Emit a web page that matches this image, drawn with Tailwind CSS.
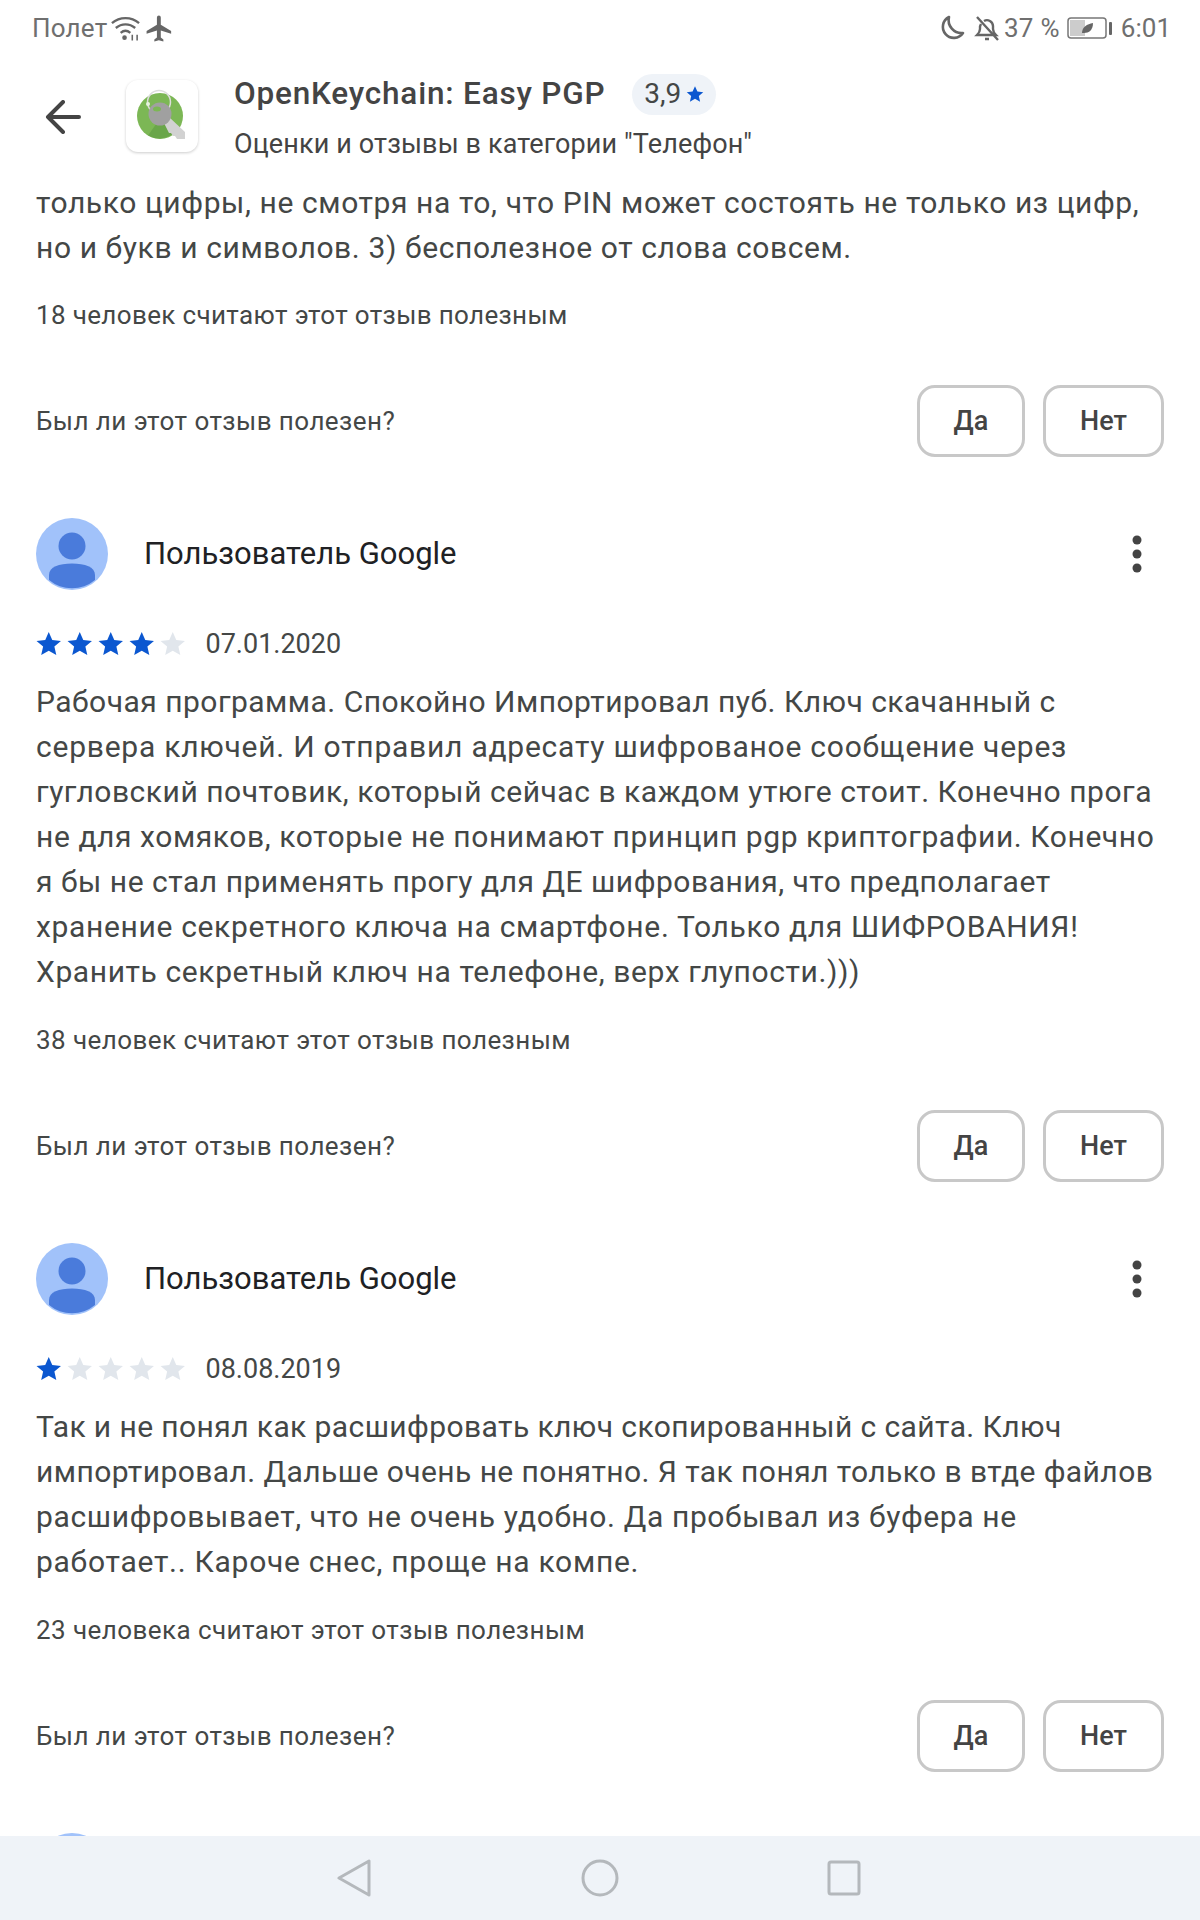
<!DOCTYPE html>
<html lang="ru"><head><meta charset="utf-8">
<script src="https://cdn.jsdelivr.net/npm/@tailwindcss/browser@4"></script>
</head>
<body class="bg-white">
<div class="w-[1200px] h-[1920px] flex flex-col overflow-hidden font-['Roboto',sans-serif] text-[#444746] bg-white">
  <div class="h-[56px] shrink-0 flex items-center justify-between pl-[32px] pr-[29px] text-[26px] text-[#6f6f6f]">
    <div class="flex items-center">
      <span class="tracking-[0.2px]">Полет</span>
      <svg class="ml-[3px]" width="31" height="28" viewBox="0 0 32 28" fill="none" stroke="#666" stroke-width="2.4"><path d="M2 9c8-7 20-7 28 0M6 14c6-5 14-5 20 0M11 19c3-2.5 7-2.5 10 0"/><circle cx="15" cy="24" r="2.4" fill="#666" stroke="none"/><path d="M23 21v6M28 21v6" stroke-width="1.6"/></svg>
      <svg class="ml-[3px]" width="31" height="31" viewBox="0 0 24 24" fill="#666"><path d="M21 16v-2l-8-5V3.500a1.500 1.500 0 0 0-3 0V9l-8 5v2l8-2.500V19l-2 1.500V22l3.500-1 3.500 1v-1.500L13 19v-5.500z"/></svg>
    </div>
    <div class="flex items-center">
      <svg width="28" height="28" viewBox="0 0 28 28" fill="none" stroke="#666" stroke-width="2.600"><path d="M11 3a11 11 0 1 0 14 16 A13 13 0 0 1 11 3z" stroke-linejoin="round"/></svg>
      <svg class="ml-[8px]" width="26" height="28" viewBox="0 0 26 28" fill="none" stroke="#666" stroke-width="2.400"><path d="M6 21h16c-2-2-3-3-3-6v-3a6 6 0 0 0-9-5M7 10c-.5 1-1 2-1 3v2c0 3-1 4-3 6h3M11 25h4M3 3l21 23"/></svg>
      <span class="ml-[4px] tracking-[0.3px]">37 %</span>
      <svg class="ml-[7px]" width="46" height="24" viewBox="0 0 46 24" fill="none"><rect x="1" y="2" width="38" height="20" rx="3" stroke="#777" stroke-width="1.500"/><rect x="3" y="4" width="15" height="16" fill="#ccc"/><path d="M15 17c0-6 5-9 11-10 0 7-4 10-9 10z" fill="#666"/><rect x="42" y="6" width="3" height="13" rx="1" fill="#666"/></svg>
      <span class="ml-[8px]">6:01</span>
    </div>
  </div>

  <div class="h-[124px] shrink-0 flex items-start pl-[45px] pt-[24px]">
    <svg class="mt-[20px]" width="36" height="34" viewBox="0 0 36 34" fill="none" stroke="#444" stroke-width="4" stroke-linecap="round" stroke-linejoin="round"><path d="M34 17H3M18 2 3 17l15 15"/></svg>
    <div class="ml-[45px] w-[72px] h-[72px] rounded-[12px] bg-white shadow-[0_1px_3px_rgba(0,0,0,0.2)] flex items-center justify-center">
      <svg width="56" height="56" viewBox="0 0 56 56"><circle cx="26" cy="28" r="23" fill="#7cb755"/><path d="M14 47.500l12-17 21 14-9 2a23 23 0 0 1-24 1z" fill="#5f9b42" opacity=".6"/><circle cx="25" cy="14" r="11.500" fill="none" stroke="#ddd" stroke-width="1.500"/><circle cx="14" cy="16" r="2" fill="#e8f2e0"/><path d="M30 35l5-6 16 15v7h-8l-2-3-2 0-2-3-2 0z" fill="#d2d2d2"/><circle cx="26" cy="26" r="11.500" fill="#a0a0a0"/><ellipse cx="23" cy="21" rx="4" ry="2.500" fill="#7cb755"/></svg>
    </div>
    <div class="ml-[36px]">
      <div class="flex items-center h-[40px] -mt-[6px]">
        <span class="text-[31.500px] font-medium text-[#444] tracking-[0.8px]">OpenKeychain: Easy PGP</span>
        <span class="ml-[27px] h-[41px] w-[84px] rounded-full bg-[#eff3f8] flex items-center justify-center gap-[5px] text-[28px]">3,9
          <svg width="18" height="18" viewBox="0 0 24 24" fill="#0b57d0"><path d="M12 1.500l3.200 7.200 7.800.8-5.900 5.200 1.700 7.700L12 18.400l-6.800 4 1.700-7.700L1 9.500l7.800-.8z"/></svg>
        </span>
      </div>
      <div class="text-[27px] leading-[40px] mt-[10px] text-[#444] tracking-[0.13px]">Оценки и отзывы в категории "Телефон"</div>
    </div>
  </div>

  <div class="flex-1 min-h-0 overflow-hidden pl-[36px] pr-[36px]">
    <div class="text-[30px] leading-[45px] whitespace-nowrap tracking-[0.6px]">
      <div>только цифры, не смотря на то, что PIN может состоять не только из цифр,</div>
      <div>но и букв и символов. 3) бесполезное от слова совсем.</div>
    </div>
    <div class="text-[26px] leading-[34px] mt-[28px] tracking-[0.35px]">18 человек считают этот отзыв полезным</div>
    <div class="flex items-center justify-between mt-[53px] h-[72px]">
      <span class="text-[26px] tracking-[0.45px]">Был ли этот отзыв полезен?</span>
      <div class="flex gap-[18px]">
        <div class="w-[108px] h-[72px] rounded-[18px] border-[3px] border-[#c8c8c8] flex items-center justify-center text-[27px] font-medium text-[#444]">Да</div>
        <div class="w-[121px] h-[72px] rounded-[18px] border-[3px] border-[#c8c8c8] flex items-center justify-center text-[27px] font-medium text-[#444]">Нет</div>
      </div>
    </div>

    <div class="mt-[61px] flex items-center h-[72px]">
      <svg width="72" height="72" viewBox="0 0 72 72"><circle cx="36" cy="36" r="36" fill="#a1c2fa"/><circle cx="36" cy="28" r="13.500" fill="#4a7bdb"/><path d="M13 62v-5c0-8 10-11.500 23-11.500S59 49 59 57v5a36 36 0 0 1-46 0z" fill="#4a7bdb"/></svg>
      <span class="ml-[36px] text-[31px] text-[#202124]">Пользователь Google</span>
      <svg class="ml-auto mr-[22px]" width="10" height="38" viewBox="0 0 10 38" fill="#444"><circle cx="5" cy="5" r="4.500"/><circle cx="5" cy="19" r="4.500"/><circle cx="5" cy="33" r="4.500"/></svg>
    </div>
    <div class="flex items-center h-[36px] mt-[36px]">
      <div class="flex gap-[5.500px]">
        <svg width="25.500" height="25.500" viewBox="0 0 24 24" fill="#0b57d0"><path d="M12 1l3.300 7.500 8.200.8-6.200 5.400 1.800 8L12 18.600l-7.100 4.100 1.800-8L.5 9.300l8.200-.8z"/></svg>
        <svg width="25.500" height="25.500" viewBox="0 0 24 24" fill="#0b57d0"><path d="M12 1l3.300 7.500 8.200.8-6.200 5.400 1.800 8L12 18.600l-7.100 4.100 1.800-8L.5 9.300l8.200-.8z"/></svg>
        <svg width="25.500" height="25.500" viewBox="0 0 24 24" fill="#0b57d0"><path d="M12 1l3.300 7.500 8.200.8-6.200 5.400 1.800 8L12 18.600l-7.100 4.100 1.800-8L.5 9.300l8.200-.8z"/></svg>
        <svg width="25.500" height="25.500" viewBox="0 0 24 24" fill="#0b57d0"><path d="M12 1l3.300 7.500 8.200.8-6.200 5.400 1.800 8L12 18.600l-7.100 4.100 1.800-8L.5 9.300l8.200-.8z"/></svg>
        <svg width="25.500" height="25.500" viewBox="0 0 24 24" fill="#e1e6ec"><path d="M12 1l3.300 7.500 8.200.8-6.200 5.400 1.800 8L12 18.600l-7.100 4.100 1.800-8L.5 9.300l8.200-.8z"/></svg>
      </div>
      <span class="ml-[20px] text-[27px]">07.01.2020</span>
    </div>
    <div class="text-[30px] leading-[45px] mt-[17px] whitespace-nowrap">
      <div class="tracking-[0.48px]">Рабочая программа. Спокойно Импортировал пуб. Ключ скачанный с</div>
      <div class="tracking-[0.76px]">сервера ключей. И отправил адресату шифрованое сообщение через</div>
      <div class="tracking-[0.53px]">гугловский почтовик, который сейчас в каждом утюге стоит. Конечно прога</div>
      <div class="tracking-[0.58px]">не для хомяков, которые не понимают принцип pgp криптографии. Конечно</div>
      <div class="tracking-[0.52px]">я бы не стал применять прогу для ДЕ шифрования, что предполагает</div>
      <div class="tracking-[0.66px]">хранение секретного ключа на смартфоне. Только для ШИФРОВАНИЯ!</div>
      <div class="tracking-[0.6px]">Хранить секретный ключ на телефоне, верх глупости.)))</div>
    </div>
    <div class="text-[26px] leading-[34px] mt-[29px] tracking-[0.44px]">38 человек считают этот отзыв полезным</div>
    <div class="flex items-center justify-between mt-[53px] h-[72px]">
      <span class="text-[26px] tracking-[0.45px]">Был ли этот отзыв полезен?</span>
      <div class="flex gap-[18px]">
        <div class="w-[108px] h-[72px] rounded-[18px] border-[3px] border-[#c8c8c8] flex items-center justify-center text-[27px] font-medium text-[#444]">Да</div>
        <div class="w-[121px] h-[72px] rounded-[18px] border-[3px] border-[#c8c8c8] flex items-center justify-center text-[27px] font-medium text-[#444]">Нет</div>
      </div>
    </div>

    <div class="mt-[61px] flex items-center h-[72px]">
      <svg width="72" height="72" viewBox="0 0 72 72"><circle cx="36" cy="36" r="36" fill="#a1c2fa"/><circle cx="36" cy="28" r="13.500" fill="#4a7bdb"/><path d="M13 62v-5c0-8 10-11.500 23-11.500S59 49 59 57v5a36 36 0 0 1-46 0z" fill="#4a7bdb"/></svg>
      <span class="ml-[36px] text-[31px] text-[#202124]">Пользователь Google</span>
      <svg class="ml-auto mr-[22px]" width="10" height="38" viewBox="0 0 10 38" fill="#444"><circle cx="5" cy="5" r="4.500"/><circle cx="5" cy="19" r="4.500"/><circle cx="5" cy="33" r="4.500"/></svg>
    </div>
    <div class="flex items-center h-[36px] mt-[36px]">
      <div class="flex gap-[5.500px]">
        <svg width="25.500" height="25.500" viewBox="0 0 24 24" fill="#0b57d0"><path d="M12 1l3.300 7.500 8.200.8-6.200 5.400 1.800 8L12 18.600l-7.100 4.100 1.800-8L.5 9.300l8.200-.8z"/></svg>
        <svg width="25.500" height="25.500" viewBox="0 0 24 24" fill="#e1e6ec"><path d="M12 1l3.300 7.500 8.200.8-6.200 5.400 1.800 8L12 18.600l-7.100 4.100 1.800-8L.5 9.300l8.200-.8z"/></svg>
        <svg width="25.500" height="25.500" viewBox="0 0 24 24" fill="#e1e6ec"><path d="M12 1l3.300 7.500 8.200.8-6.200 5.400 1.800 8L12 18.600l-7.100 4.100 1.800-8L.5 9.300l8.200-.8z"/></svg>
        <svg width="25.500" height="25.500" viewBox="0 0 24 24" fill="#e1e6ec"><path d="M12 1l3.300 7.500 8.200.8-6.200 5.400 1.800 8L12 18.600l-7.100 4.100 1.800-8L.5 9.300l8.200-.8z"/></svg>
        <svg width="25.500" height="25.500" viewBox="0 0 24 24" fill="#e1e6ec"><path d="M12 1l3.300 7.500 8.200.8-6.200 5.400 1.800 8L12 18.600l-7.100 4.100 1.800-8L.5 9.300l8.200-.8z"/></svg>
      </div>
      <span class="ml-[20px] text-[27px]">08.08.2019</span>
    </div>
    <div class="text-[30px] leading-[45px] mt-[17px] whitespace-nowrap">
      <div class="tracking-[0.41px]">Так и не понял как расшифровать ключ скопированный с сайта. Ключ</div>
      <div class="tracking-[0.43px]">импортировал. Дальше очень не понятно. Я так понял только в втде файлов</div>
      <div class="tracking-[0.64px]">расшифровывает, что не очень удобно. Да пробывал из буфера не</div>
      <div class="tracking-[0.73px]">работает.. Кароче снес, проще на компе.</div>
    </div>
    <div class="text-[26px] leading-[34px] mt-[29px] tracking-[0.43px]">23 человека считают этот отзыв полезным</div>
    <div class="flex items-center justify-between mt-[53px] h-[72px]">
      <span class="text-[26px] tracking-[0.45px]">Был ли этот отзыв полезен?</span>
      <div class="flex gap-[18px]">
        <div class="w-[108px] h-[72px] rounded-[18px] border-[3px] border-[#c8c8c8] flex items-center justify-center text-[27px] font-medium text-[#444]">Да</div>
        <div class="w-[121px] h-[72px] rounded-[18px] border-[3px] border-[#c8c8c8] flex items-center justify-center text-[27px] font-medium text-[#444]">Нет</div>
      </div>
    </div>
    <div class="mt-[61px] w-[72px] h-[72px] rounded-full bg-[#a1c2fa]"></div>
  </div>

  <div class="h-[84px] shrink-0 bg-[#eff3f8] flex items-center justify-between pl-[336px] pr-[339px]">
    <svg width="36" height="38" viewBox="0 0 36 38" fill="none" stroke="#b4b8bc" stroke-width="3" stroke-linejoin="round"><path d="M33 2v34L3 19z"/></svg>
    <svg width="38" height="38" viewBox="0 0 38 38" fill="none" stroke="#b4b8bc" stroke-width="3"><circle cx="19" cy="19" r="17"/></svg>
    <svg width="34" height="36" viewBox="0 0 34 36" fill="none" stroke="#b4b8bc" stroke-width="3"><rect x="2" y="2" width="30" height="32" rx="2"/></svg>
  </div>
</div>
</body></html>
